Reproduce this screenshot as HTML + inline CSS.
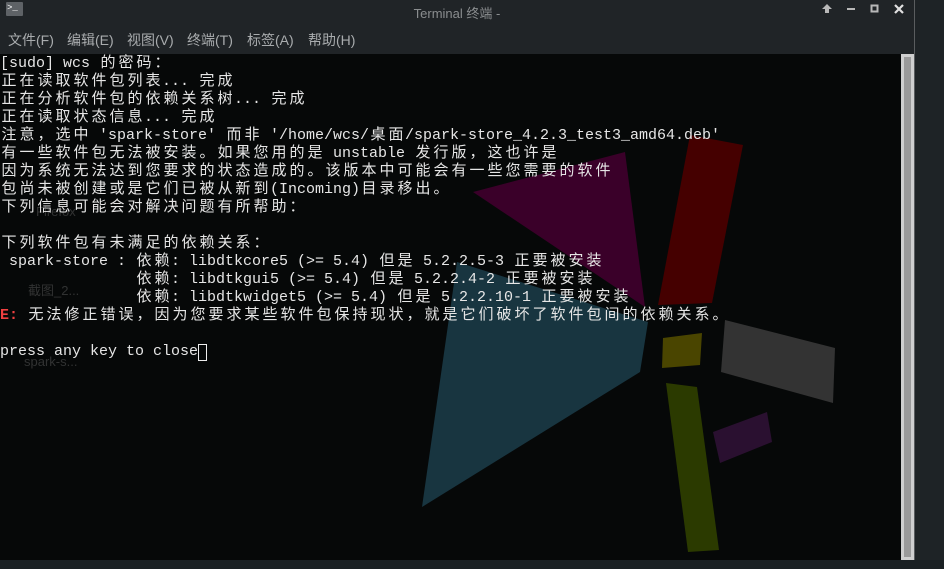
<!DOCTYPE html>
<html><head><meta charset="utf-8"><style>
html,body{margin:0;padding:0;width:944px;height:569px;overflow:hidden;background:#1a2023;}
#title{position:absolute;left:0;top:0;width:914px;height:22px;background:#202427;}
#title .t{position:absolute;left:0;width:914px;top:3px;text-align:center;color:#8a8d8f;font:13px "Liberation Sans","Noto Sans CJK SC",sans-serif;}
#menu{position:absolute;left:0;top:22px;width:914px;height:32px;background:#202427;color:#a9acae;font:14px "Liberation Sans","Noto Sans CJK SC",sans-serif;}
#menu span{position:absolute;top:8px;}
#right{position:absolute;left:914px;top:0;width:30px;height:560px;background:#1e2326;border-left:1px solid #5a5d5f;}
#term{position:absolute;left:0;top:54px;width:901px;height:506px;background:#060808;overflow:hidden;}
#sb{position:absolute;left:901px;top:54px;width:13px;height:506px;background:#cfcfcf;}
#sb div{position:absolute;left:3px;top:3px;width:7px;height:500px;background:#9a9a9a;}
.l{position:absolute;left:0;height:18px;white-space:pre;color:#e6e6e6;font:15px "Liberation Mono","Noto Sans CJK SC",monospace;line-height:18px;}
.l span{display:inline-block;text-align:center;white-space:pre;}
.ghost{position:absolute;color:rgba(150,150,150,0.3);font:13px "Liberation Sans","Noto Sans CJK SC",sans-serif;}
</style></head><body>
<div id="title">
<div style="position:absolute;left:6px;top:2px;width:16px;height:14px;background:#5e6266;border-radius:1px;color:#fff;font:9px 'Liberation Mono',monospace;line-height:12px;padding-left:1px">&gt;_</div>
<div class="t">Terminal 终端 -</div>
<svg style="position:absolute;left:0;top:0" width="914" height="22">
<path d="M827 4 L822 9 H825 V13 H829 V9 H832 Z" fill="#b8b8b8"/>
<rect x="847" y="8" width="8" height="2" fill="#b8b8b8"/>
<rect x="871.5" y="5.5" width="6" height="6" fill="none" stroke="#b8b8b8" stroke-width="2"/>
<path d="M895 5 L903 13 M903 5 L895 13" stroke="#e0e0e0" stroke-width="2.2"/>
</svg>
</div>
<div id="menu"><span style="left:8px">文件(F)</span><span style="left:67px">编辑(E)</span><span style="left:127px">视图(V)</span><span style="left:187px">终端(T)</span><span style="left:247px">标签(A)</span><span style="left:308px">帮助(H)</span></div>
<div id="right"></div>
<div id="term">
<svg style="position:absolute;left:0;top:-54px" width="901" height="569">
<polygon points="473,192 625,152 645,307" fill="#3a0029"/>
<polygon points="690,135 743,145 712,303 658,305" fill="#450000"/>
<polygon points="457,262 648,322 640,372 422,507" fill="#183540"/>
<polygon points="663,338 702,333 700,365 662,368" fill="#4a4500"/>
<polygon points="725,320 835,348 833,403 721,372" fill="#333333"/>
<polygon points="666,383 697,387 719,550 688,552" fill="#2b3a00"/>
<polygon points="713,432 767,412 772,442 720,463" fill="#2a1030"/>
</svg>
<div class="ghost" style="left:36px;top:150px">Firefox</div>
<div class="ghost" style="left:28px;top:226px">截图_2...</div>
<div class="ghost" style="left:24px;top:300px">spark-s...</div>
<div id="lines"></div>
</div>
<div id="sb"><div></div></div>
<script>
var L=["[sudo] wcs 的密码：","正在读取软件包列表... 完成","正在分析软件包的依赖关系树... 完成","正在读取状态信息... 完成","注意，选中 'spark-store' 而非 '/home/wcs/桌面/spark-store_4.2.3_test3_amd64.deb'","有一些软件包无法被安装。如果您用的是 unstable 发行版，这也许是","因为系统无法达到您要求的状态造成的。该版本中可能会有一些您需要的软件","包尚未被创建或是它们已被从新到(Incoming)目录移出。","下列信息可能会对解决问题有所帮助：","","下列软件包有未满足的依赖关系："," spark-store : 依赖: libdtkcore5 (>= 5.4) 但是 5.2.2.5-3 正要被安装","               依赖: libdtkgui5 (>= 5.4) 但是 5.2.2.4-2 正要被安装","               依赖: libdtkwidget5 (>= 5.4) 但是 5.2.2.10-1 正要被安装","E: 无法修正错误，因为您要求某些软件包保持现状，就是它们破坏了软件包间的依赖关系。","","press any key to close"];
var c=document.getElementById('lines');
L.forEach(function(s,i){var d=document.createElement('div');d.className='l';d.style.top=(i*18+1)+'px';
for(var k=0;k<s.length;k++){var ch=s[k];var sp=document.createElement('span');var w=ch.charCodeAt(0)>0x2e80?18:9;sp.style.width=w+'px';sp.textContent=ch==' '?'\u00a0':ch;
if(i==14&&k<2){sp.style.color='#f04040';sp.style.fontWeight='bold';}d.appendChild(sp);}
if(i==16){var cur=document.createElement('span');cur.style.cssText='width:9px;height:17px;box-sizing:border-box;border:1px solid #eee;vertical-align:top;margin-top:1px';d.appendChild(cur);}
c.appendChild(d);});
</script>
</body></html>
